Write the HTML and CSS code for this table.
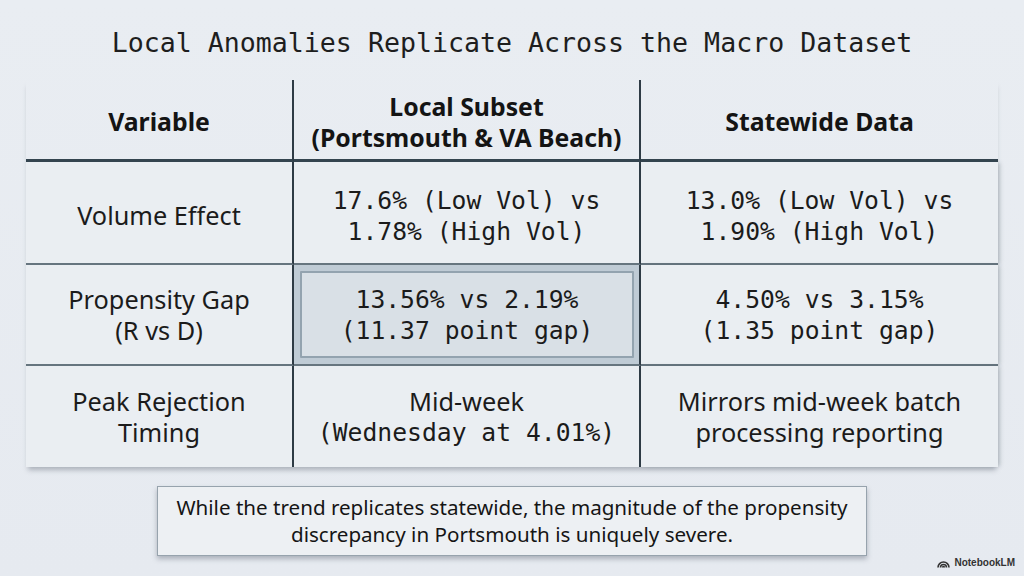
FILE: index.html
```html
<!DOCTYPE html>
<html>
<head>
<meta charset="utf-8">
<link rel="stylesheet" href="styles.css">
</head>
<body>
<div class="slide">
  <h1 class="title">Local Anomalies Replicate Across the Macro Dataset</h1>
  <div class="table">
    <div class="hcell c1">Variable</div>
    <div class="hcell c2">Local Subset<br>(Portsmouth &amp; VA Beach)</div>
    <div class="hcell c3">Statewide Data</div>

    <div class="cell c1 sans first">Volume Effect</div>
    <div class="cell c2 mono first">17.6% (Low Vol) vs<br>1.78% (High Vol)</div>
    <div class="cell c3 mono first">13.0% (Low Vol) vs<br>1.90% (High Vol)</div>

    <div class="cell c1 sans">Propensity Gap<br>(R vs D)</div>
    <div class="cell c2 mono hl"><div class="hlbox">13.56% vs 2.19%<br>(11.37 point gap)</div></div>
    <div class="cell c3 mono">4.50% vs 3.15%<br>(1.35 point gap)</div>

    <div class="cell c1 sans last">Peak Rejection<br>Timing</div>
    <div class="cell c2 last"><div class="mix"><div class="sans">Mid-week</div><div class="mono">(Wednesday at 4.01%)</div></div></div>
    <div class="cell c3 sans last">Mirrors mid-week batch<br>processing reporting</div>
  </div>
  <div class="note">While the trend replicates statewide, the magnitude of the propensity<br>discrepancy in Portsmouth is uniquely severe.</div>
  <div class="brand">
    <svg width="13" height="10" viewBox="0 0 13 10"><path d="M1 9.5 A5.5 5.5 0 0 1 12 9.5" fill="none" stroke="#333" stroke-width="1.6"/><path d="M3.5 9.5 A3 3 0 0 1 9.5 9.5" fill="none" stroke="#333" stroke-width="1.6"/><path d="M5.6 9.5 A0.9 0.9 0 0 1 7.4 9.5" fill="none" stroke="#333" stroke-width="1.6"/></svg>
    <span>NotebookLM</span>
  </div>
</div>
</body>
</html>
```
FILE: styles.css
```css
html, body { margin: 0; padding: 0; }
body { width: 1024px; height: 576px; overflow: hidden; background: #e8ecf1; }
.slide { position: relative; width: 1024px; height: 576px; display: flex; flex-direction: column; align-items: center; background: linear-gradient(180deg, #e9edf2 0%, #e6eaf0 100%); }
.title { margin: 26px 0 0 0; font-family: "DejaVu Sans Mono", "Liberation Mono", monospace; font-weight: normal; font-size: 26.6px; line-height: 34px; color: #1e1e1e; }
.table { margin-top: 20px; width: 972px; display: grid; grid-template-columns: 268px 347px 357px; grid-template-rows: 82px 103px 101px 101px; box-shadow: 0 5px 5px -2px rgba(60,70,85,0.35); }
.hcell { display: flex; align-items: center; justify-content: center; text-align: center; font-family: "Noto Sans", "Open Sans", sans-serif; font-weight: bold; font-size: 24.8px; line-height: 31px; color: #141414; border-bottom: 3px solid #34444f; padding-top: 4px; box-sizing: border-box; }
.hcell.c1, .hcell.c2 { border-right: 2px solid #2e3b45; }
.cell { display: flex; flex-direction: column; align-items: center; justify-content: center; text-align: center; color: #1b1b1b; border-bottom: 2px solid #66757f; background: #eaeef2; box-sizing: border-box; padding-top: 1px; }
.cell.first { padding-top: 6px; }
.cell.c1, .cell.c2 { border-right: 2px solid #2e3b45; }
.cell.last { border-bottom: none; }
.cell.c3 { box-shadow: 3px 0 4px -1px rgba(60,70,85,0.25); }
.sans { font-family: "Noto Sans", "Open Sans", sans-serif; font-size: 25.3px; line-height: 31px; }
.mono { font-family: "DejaVu Sans Mono", "Liberation Mono", monospace; font-size: 24.7px; line-height: 31px; }
.mix { display: flex; flex-direction: column; align-items: center; }
.cell.hl { padding: 6px 5px 6px 6px; align-items: stretch; background: #bfcbd5; }
.hlbox { flex: 1; display: flex; align-items: center; justify-content: center; background: #d9e0e6; border: 2px solid #93a3af; border-radius: 1px; }
.note { margin-top: 19px; width: 708px; height: 68px; display: flex; align-items: center; justify-content: center; text-align: center; background: #edf0f3; border: 1px solid #97a3ad; box-shadow: 0 3px 5px rgba(60,70,85,0.35); font-family: "Noto Sans", "Open Sans", sans-serif; font-size: 20.6px; line-height: 27px; color: #151515; }
.brand { position: absolute; right: 9px; bottom: 8px; display: flex; align-items: center; gap: 4px; font-family: "Liberation Sans", Arial, sans-serif; font-size: 10px; font-weight: bold; color: #333; }
```
